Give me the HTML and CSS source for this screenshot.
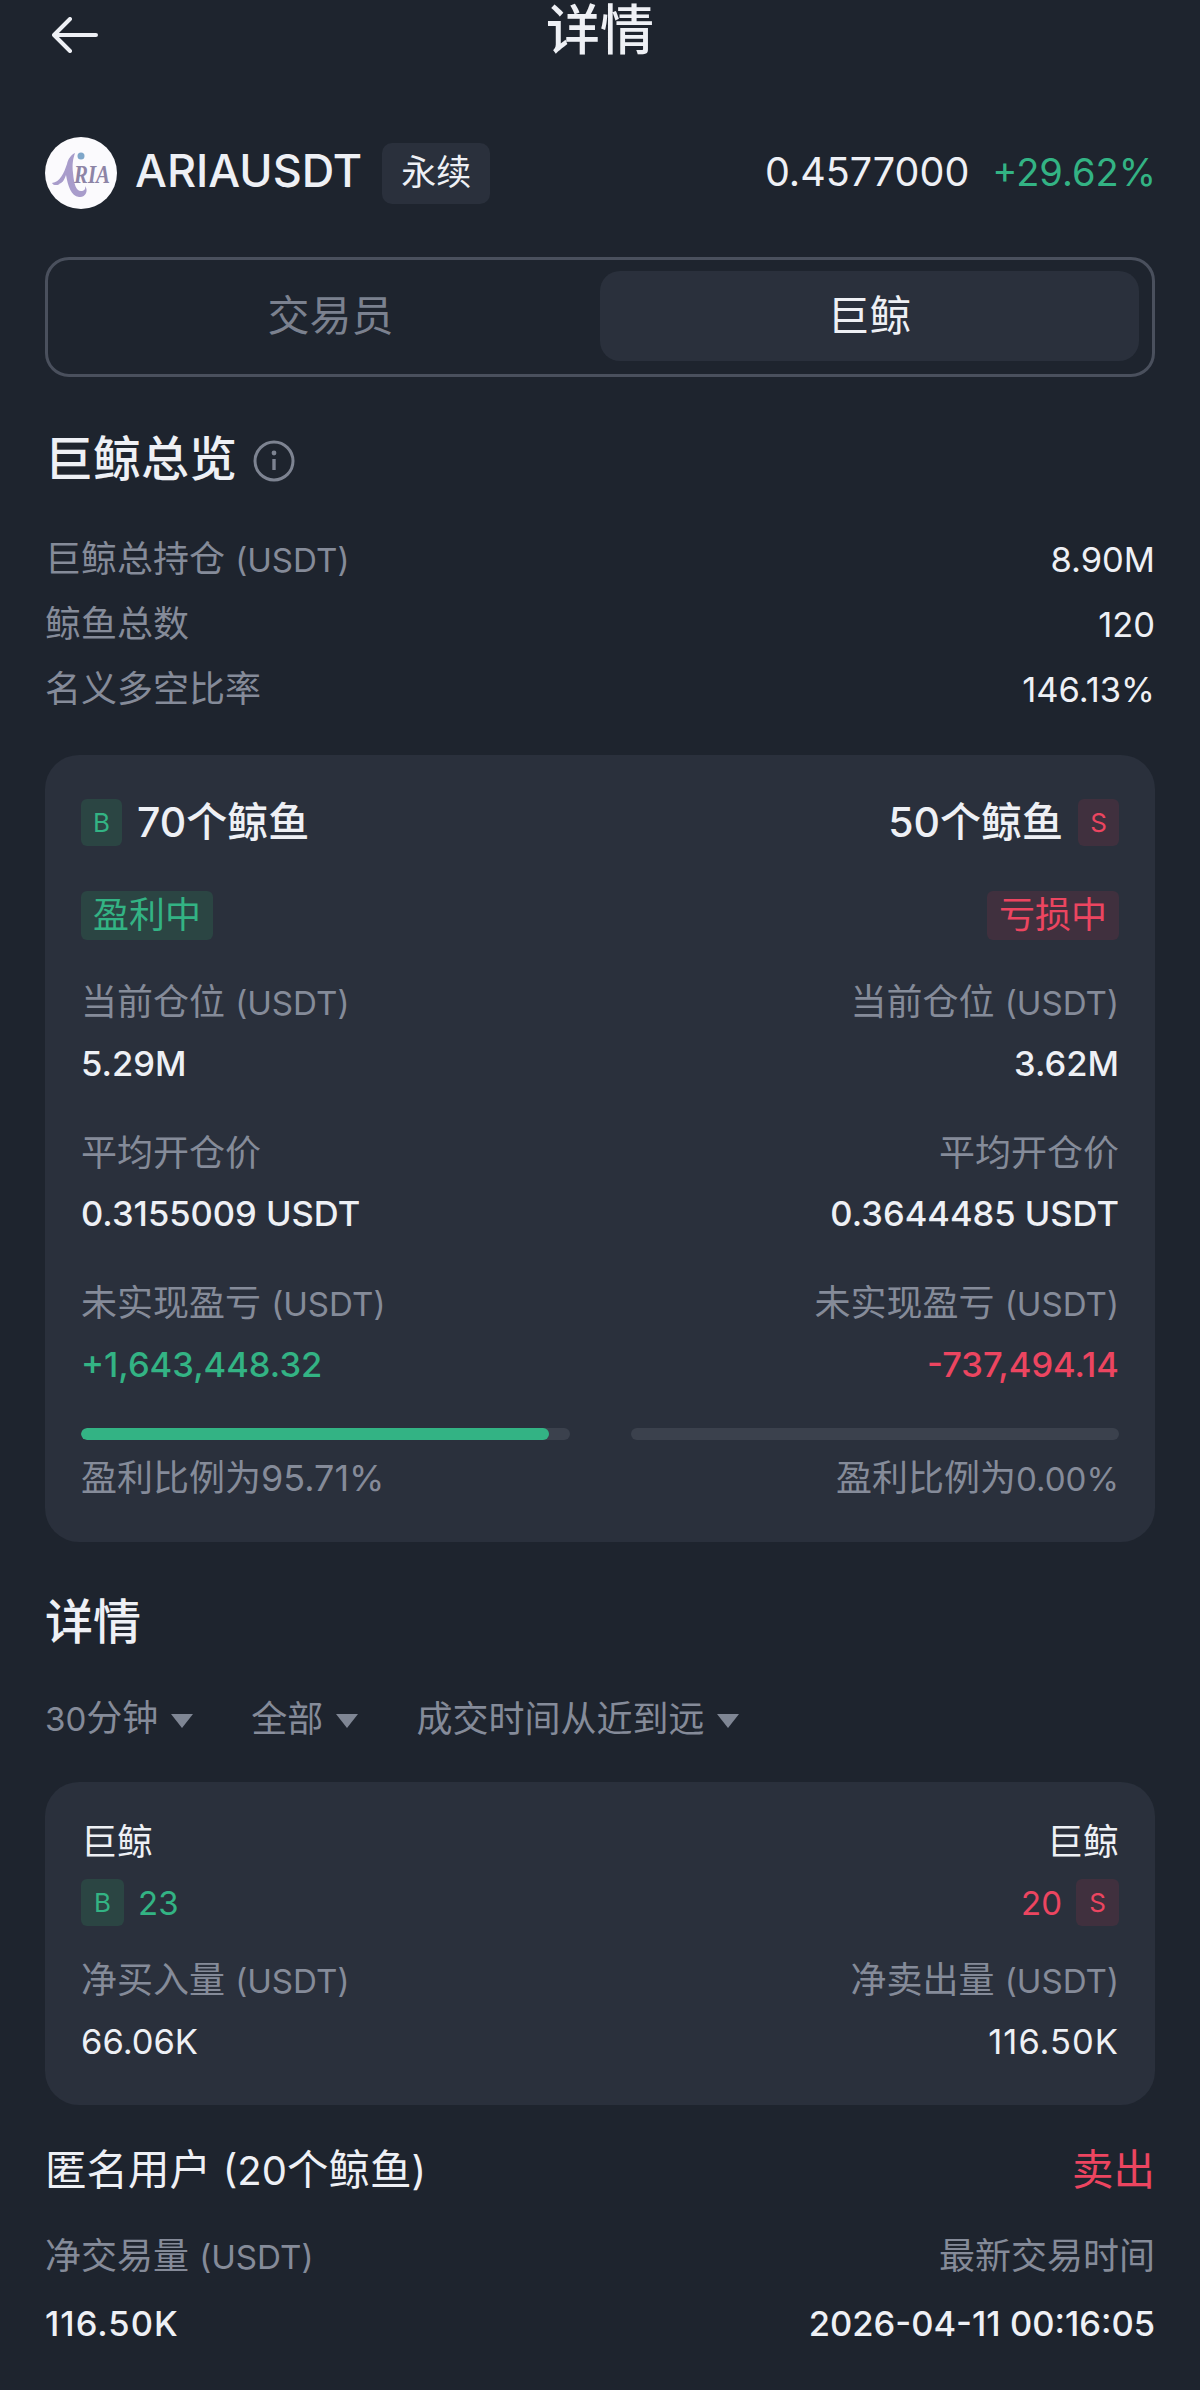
FILE: index.html
```html
<!DOCTYPE html>
<html lang="zh-CN">
<head>
  <meta charset="UTF-8" />
  <meta name="viewport" content="width=device-width, initial-scale=1.0"/>
  <title>详情</title>
  <link rel="stylesheet" href="styles.css">
</head>
<body>
  <header class="topbar">
    <svg class="back" viewBox="0 0 46 36" fill="none" stroke="#eef0f5" stroke-width="4" stroke-linecap="round" stroke-linejoin="round"><path d="M44 18H3M18 2 2 18l16 16"/></svg>
    <h1>详情</h1>
  </header>

  <section class="symbol">
    <div class="symbol-left">
      <svg class="logo" viewBox="0 0 72 72">
        <circle cx="36" cy="36" r="36" fill="#fbfafd"/>
        <circle cx="36" cy="19" r="3.5" fill="#7fa6c9"/>
        <path d="M7 46c8-1 12-10 15-19 1-5 4-9 8-11-2 6-3 11-2 20 1 11 3 18 8 18 3 0 5-2 4-5 4 5 0 12-6 11-8-1-11-11-13-22-2 6-4 8-7 9 2 0-5 3-7-1z" fill="#a89ccb"/>
        <text class="logo-text" x="29" y="46" textLength="36" lengthAdjust="spacingAndGlyphs">RIA</text>
      </svg>
      <span class="symbol-name">ARIAUSDT</span>
      <span class="symbol-tag">永续</span>
    </div>
    <div class="symbol-right">
      <span class="price">0.4577000</span>
      <span class="change">+29.62%</span>
    </div>
  </section>

  <nav class="tabs">
    <div class="tab">交易员</div>
    <div class="tab active">巨鲸</div>
  </nav>

  <section class="overview">
    <h2 class="section-title">巨鲸总览
      <svg class="info" viewBox="0 0 42 42" fill="none"><circle cx="21" cy="21" r="19" stroke="#7d8391" stroke-width="3"/><circle cx="21" cy="13" r="2.4" fill="#7d8391"/><path d="M21 19v11" stroke="#7d8391" stroke-width="3.4"/></svg>
    </h2>
    <div class="stat-row"><span>巨鲸总持仓 <span class="unit">(USDT)</span></span><b>8.90M</b></div>
    <div class="stat-row"><span>鲸鱼总数</span><b>120</b></div>
    <div class="stat-row"><span>名义多空比率</span><b>146.13%</b></div>
  </section>

  <section class="card summary">
    <div class="side">
      <div class="side-head"><span class="badge buy">B</span><span class="count">70个鲸鱼</span></div>
      <span class="status buy">盈利中</span>
      <div class="metric"><span class="label">当前仓位 <span class="unit">(USDT)</span></span><span class="value">5.29M</span></div>
      <div class="metric"><span class="label">平均开仓价</span><span class="value">0.3155009 USDT</span></div>
      <div class="metric"><span class="label">未实现盈亏 <span class="unit">(USDT)</span></span><span class="value green">+1,643,448.32</span></div>
      <div class="bar"><div class="bar-fill" style="width:95.71%"></div></div>
      <div class="bar-label">盈利比例为95.71%</div>
    </div>
    <div class="side right">
      <div class="side-head"><span class="count">50个鲸鱼</span><span class="badge sell">S</span></div>
      <span class="status sell">亏损中</span>
      <div class="metric"><span class="label">当前仓位 <span class="unit">(USDT)</span></span><span class="value">3.62M</span></div>
      <div class="metric"><span class="label">平均开仓价</span><span class="value">0.3644485 USDT</span></div>
      <div class="metric"><span class="label">未实现盈亏 <span class="unit">(USDT)</span></span><span class="value red">-737,494.14</span></div>
      <div class="bar"></div>
      <div class="bar-label">盈利比例为<span class="unit">0.00%</span></div>
    </div>
  </section>

  <h2 class="section-title details-title">详情</h2>

  <div class="filters">
    <span class="filter"><span><span class="unit">30</span>分钟</span><i class="caret"></i></span>
    <span class="filter">全部<i class="caret"></i></span>
    <span class="filter">成交时间从近到远<i class="caret"></i></span>
  </div>

  <section class="card trades">
    <div class="side">
      <div class="trade-name">巨鲸</div>
      <div class="trade-count"><span class="badge buy">B</span><span class="green">23</span></div>
      <div class="metric"><span class="label">净买入量 <span class="unit">(USDT)</span></span><span class="value thin">66.06K</span></div>
    </div>
    <div class="side right">
      <div class="trade-name">巨鲸</div>
      <div class="trade-count"><span class="red">20</span><span class="badge sell">S</span></div>
      <div class="metric"><span class="label">净卖出量 <span class="unit">(USDT)</span></span><span class="value thin wide">116.50K</span></div>
    </div>
  </section>

  <section class="user">
    <div class="user-head"><span>匿名用户 <span class="unit-lg">(20</span>个鲸鱼<span class="unit-lg">)</span></span><span class="sell-text">卖出</span></div>
    <div class="user-row"><span class="label">净交易量 <span class="unit">(USDT)</span></span><span class="label">最新交易时间</span></div>
    <div class="user-row values"><span class="wide">116.50K</span><span>2026-04-11 00:16:05</span></div>
  </section>
</body>
</html>
```

FILE: styles.css
```css
* {
  box-sizing: border-box;
}
html, body {
  height: 2390px;
}
body {
  margin: 0;
  padding: 0 45px;
  overflow: hidden;
  background-color: #1e242e;
  color: #eef0f5;
  font-family: Inter, 'Noto Sans CJK SC', sans-serif;
  font-size: 36px;
}
h1, h2 {
  margin: 0;
  font-weight: 500;
}
.unit {
  font-size: 0.92em;
}
.unit-lg {
  font-size: 40px;
}
.wide {
  letter-spacing: 1px;
}
.topbar {
  height: 62px;
  position: relative;
  text-align: center;
}
.topbar h1 {
  font-size: 54px;
  line-height: 62px;
}
.back {
  position: absolute;
  left: 7px;
  top: 17px;
  width: 46px;
  height: 36px;
}
.symbol {
  margin-top: 75px;
  height: 72px;
  display: flex;
  justify-content: space-between;
  align-items: center;
}
.symbol-left, .symbol-right {
  display: flex;
  align-items: center;
}
.symbol-right {
  padding-bottom: 2px;
}
.logo {
  width: 72px;
  height: 72px;
}
.logo-text {
  font-family: 'Liberation Serif', serif;
  font-size: 25px;
  font-weight: bold;
  font-style: italic;
  fill: #8d84a6;
}
.symbol-name {
  margin-left: 18px;
  padding-bottom: 5px;
  font-size: 45px;
  font-weight: 500;
}
.symbol-tag {
  margin-left: 20px;
  width: 108px;
  height: 61px;
  line-height: 58px;
  text-align: center;
  font-size: 35px;
  background-color: #2a303c;
  border-radius: 10px;
}
.price {
  font-size: 39.5px;
}
.change {
  margin-left: 23px;
  margin-right: -1px;
  font-size: 38px;
  color: #33b384;
}
.green {
  color: #33b384;
}
.red {
  color: #ec4560;
}
.tabs {
  margin-top: 48px;
  height: 120px;
  padding: 11px 13px 13px;
  display: flex;
  border: 3px solid #4a505d;
  border-radius: 24px;
}
.tab {
  flex: 1;
  display: flex;
  align-items: center;
  justify-content: center;
  padding-bottom: 7px;
  font-size: 42px;
  color: #7b818f;
}
.tab.active {
  color: #eef0f5;
  background-color: #2a303c;
  border-radius: 20px;
}
.section-title {
  font-size: 48px;
  line-height: 60px;
  display: flex;
  align-items: center;
}
.info {
  width: 42px;
  height: 42px;
  margin-left: 16px;
  margin-top: 3px;
}
.overview {
  margin-top: 52px;
}
.overview .section-title {
  margin-bottom: 38px;
}
.stat-row {
  display: flex;
  justify-content: space-between;
  height: 65px;
  line-height: 65px;
  color: #858b99;
}
.stat-row b {
  font-size: 34.5px;
  font-weight: 400;
  color: #eef0f5;
}
.card {
  background-color: #2a303c;
  border-radius: 34px;
  padding: 0 36px;
  display: flex;
  justify-content: space-between;
}
.summary {
  margin-top: 33px;
  height: 787px;
  gap: 61px;
  padding-top: 44px;
}
.side {
  flex: 1;
  display: flex;
  flex-direction: column;
  align-items: flex-start;
}
.side.right {
  align-items: flex-end;
}
.side-head {
  display: flex;
  align-items: center;
  height: 47px;
  gap: 15px;
}
.count {
  margin-top: -8px;
  font-size: 41px;
  font-weight: 500;
}
.badge {
  width: 41px;
  height: 47px;
  line-height: 47px;
  text-align: center;
  font-size: 26px;
  font-weight: 400;
  border-radius: 6px;
}
.buy {
  color: #33b384;
  background-color: #2b4543;
}
.sell {
  color: #ec4560;
  background-color: #40303e;
}
.status {
  margin-top: 45px;
  height: 49px;
  line-height: 48px;
  padding: 0 12px;
  font-size: 36px;
  border-radius: 6px;
}
.metric {
  display: flex;
  flex-direction: column;
  margin-top: 37px;
}
.right .metric {
  align-items: flex-end;
}
.metric + .metric {
  margin-top: 39px;
}
.label {
  color: #858b99;
  line-height: 50px;
}
.value {
  margin-top: 11px;
  line-height: 50px;
  font-size: 34.5px;
  font-weight: 500;
}
.value.thin {
  font-weight: 400;
}
.bar {
  width: 100%;
  height: 12px;
  margin-top: 38px;
  background-color: #3b414d;
  border-radius: 6px;
  overflow: hidden;
}
.bar-fill {
  height: 100%;
  background-color: #33b384;
  border-radius: 6px;
}
.bar-label {
  margin-top: 13px;
  line-height: 50px;
  color: #858b99;
}
.details-title {
  margin-top: 50px;
}
.filters {
  margin-top: 41px;
  display: flex;
  gap: 58px;
  color: #858b99;
  line-height: 50px;
}
.filter {
  display: flex;
  align-items: center;
  gap: 13px;
}
.caret {
  width: 0;
  height: 0;
  margin-top: 4px;
  border-left: 11px solid transparent;
  border-right: 11px solid transparent;
  border-top: 14px solid #7f8694;
}
.trades {
  margin-top: 38px;
  height: 323px;
  padding-top: 35px;
}
.trade-name {
  line-height: 50px;
}
.trade-count {
  margin-top: 12px;
  display: flex;
  align-items: center;
  gap: 14px;
  font-size: 33px;
}
.trade-count .badge {
  width: 43px;
}
.trades .metric {
  margin-top: 29px;
}
.user {
  margin-top: 35px;
}
.user-head {
  display: flex;
  justify-content: space-between;
  font-size: 41.5px;
  line-height: 60px;
}
.sell-text {
  color: #ec4560;
}
.user-row {
  display: flex;
  justify-content: space-between;
  margin-top: 30px;
}
.user-row.values {
  margin-top: 17px;
  line-height: 50px;
  font-size: 34.5px;
  font-weight: 500;
}
```
